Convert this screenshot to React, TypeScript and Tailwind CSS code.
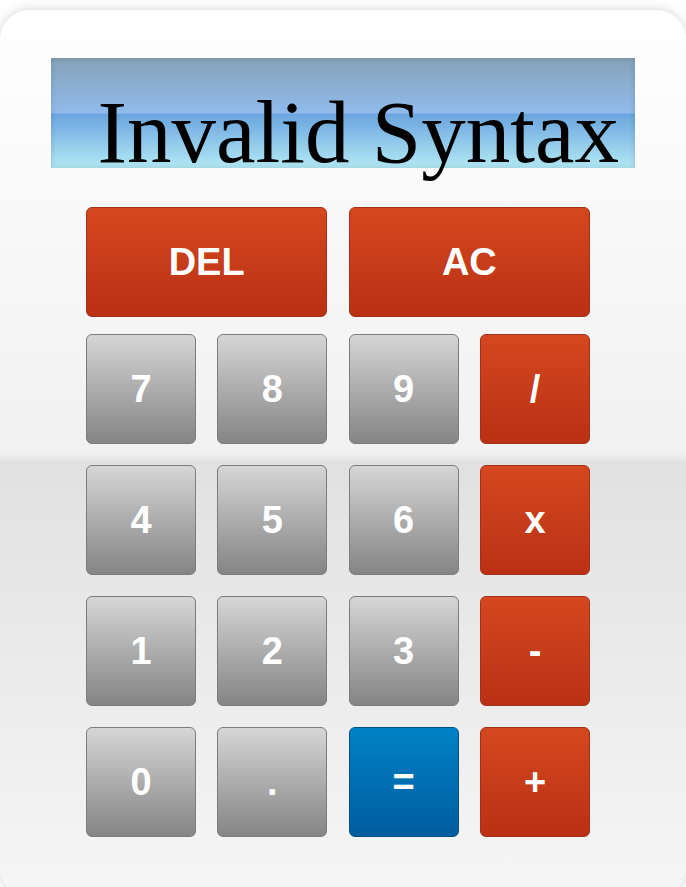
const keys: { label: string; kind: "num" | "op" | "eq" }[] = [
  { label: "7", kind: "num" },
  { label: "8", kind: "num" },
  { label: "9", kind: "num" },
  { label: "/", kind: "op" },
  { label: "4", kind: "num" },
  { label: "5", kind: "num" },
  { label: "6", kind: "num" },
  { label: "x", kind: "op" },
  { label: "1", kind: "num" },
  { label: "2", kind: "num" },
  { label: "3", kind: "num" },
  { label: "-", kind: "op" },
  { label: "0", kind: "num" },
  { label: ".", kind: "num" },
  { label: "=", kind: "eq" },
  { label: "+", kind: "op" },
]

const kindClass = {
  num: "border-[#7c7c7c] bg-gradient-to-b from-[#d6d6d6] to-[#858585]",
  op: "border-[#a3301a] bg-gradient-to-b from-[#d4471f] to-[#ba3014]",
  eq: "border-[#004f86] bg-gradient-to-b from-[#0081c5] to-[#005d9f]",
}

function Key({ label, kind, wide }: { label: string; kind: "num" | "op" | "eq"; wide?: boolean }) {
  return (
    <button
      className={`flex h-[110px] items-center justify-center rounded-[6px] border text-[38px] font-bold text-white ${kindClass[kind]} ${
        wide ? "col-span-2" : ""
      }`}
      style={{ fontFamily: '"Liberation Sans", Arial, sans-serif' }}
    >
      {label}
    </button>
  )
}

export default function App() {
  return (
    <div className="min-h-screen overflow-hidden bg-white pt-[10px]">
      <div className="h-[887px] w-[686px] rounded-[30px] bg-[linear-gradient(to_bottom,#ffffff_0%,#f1f1f1_50%,#e1e1e1_51%,#f6f6f6_100%)] pt-[48px] shadow-[0_0_12px_rgba(0,0,0,0.18)]">
        {/* display */}
        <div className="mx-[51px] h-[110px] bg-[linear-gradient(to_bottom,#86a2b8_0%,#90bbec_50%,#6aa5de_51%,#b3e9f5_100%)] pr-[16px] pt-[30px] shadow-[inset_0_0_6px_rgba(0,0,0,0.15)]">
          <div
            className="text-right text-[89px] leading-[89px] text-black"
            style={{ fontFamily: '"Liberation Serif", "Times New Roman", serif' }}
          >
            Invalid Syntax
          </div>
        </div>

        {/* keypad */}
        <div className="ml-[86px] mt-[39px] w-[504px]">
          <div className="grid grid-cols-[repeat(4,110px)] gap-x-[21.33px]">
            <Key label="DEL" kind="op" wide />
            <Key label="AC" kind="op" wide />
          </div>
          <div className="mt-[17px] grid grid-cols-[repeat(4,110px)] gap-x-[21.33px] gap-y-[21px]">
            {keys.map((k) => (
              <Key key={k.label} label={k.label} kind={k.kind} />
            ))}
          </div>
        </div>
      </div>
    </div>
  )
}
